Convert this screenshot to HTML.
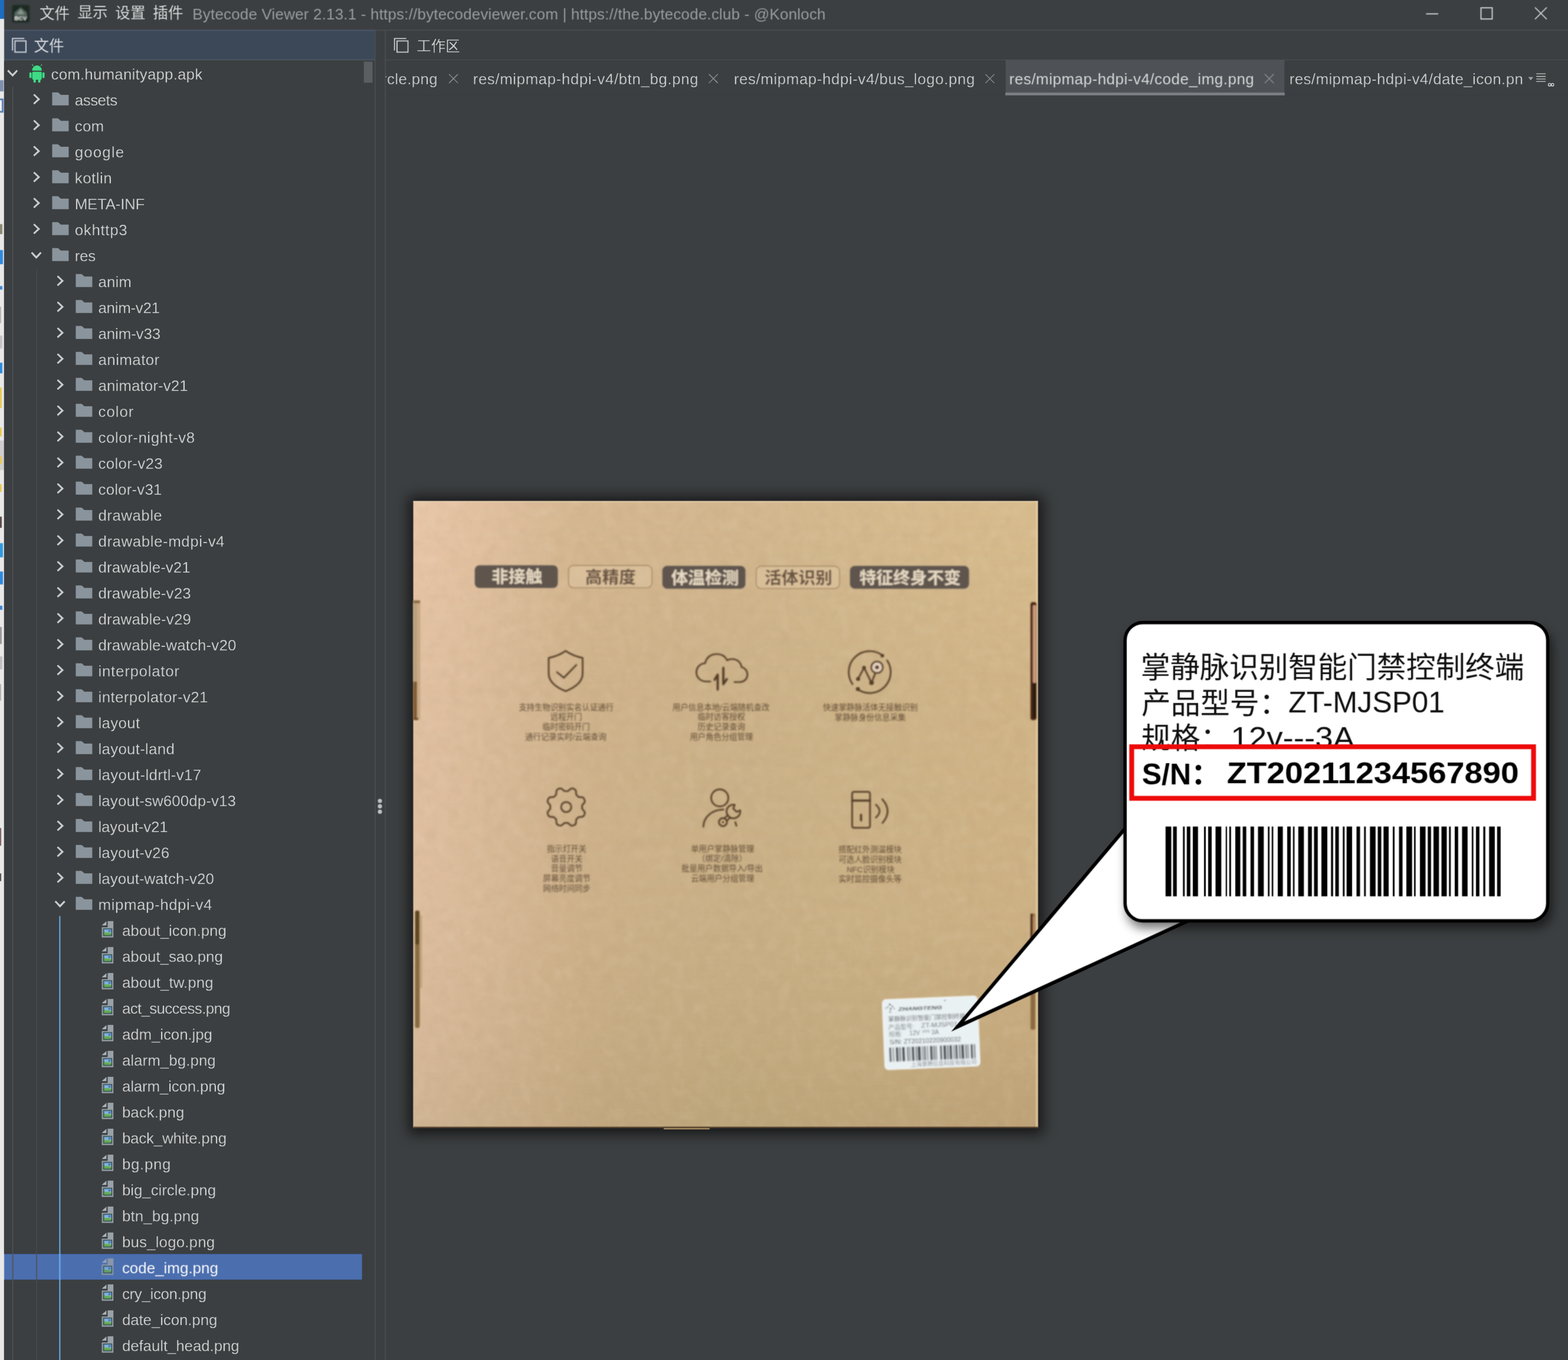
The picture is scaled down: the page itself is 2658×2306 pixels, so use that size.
<!DOCTYPE html>
<html><head><meta charset="utf-8"><title>Bytecode Viewer</title>
<style>
html,body{margin:0;padding:0}
body{width:2658px;height:2306px;background:#3c3f41;position:relative;overflow:hidden;font-family:"Liberation Sans",sans-serif;font-size:26px;color:#cbcdce}
.a{position:absolute}
.t{position:absolute;white-space:pre;line-height:44px;height:44px}
svg{position:absolute;left:0;top:0;overflow:visible}
#w{position:absolute;left:0;top:0;width:2658px;height:2306px;overflow:hidden;filter:url(#gb)}
.cj{font-family:"Liberation Sans","Noto Sans CJK SC",sans-serif}
</style></head><body><svg width="0" height="0" style="position:absolute"><defs><filter id="gb" x="0" y="0" width="100%" height="100%" color-interpolation-filters="sRGB"><feConvolveMatrix order="3" kernelMatrix="0.062 0.249 0.062 0.249 1 0.249 0.062 0.249 0.062" divisor="2.244" edgeMode="duplicate" preserveAlpha="true"/></filter></defs></svg><div id="w">

<div class="a" style="left:0;top:0;width:6.8px;height:2306px;background:#e8e8e8"></div>
<div class="a" style="left:0;top:0;width:6.8px;height:31.5px;background:#1c6cc0"></div>
<div class="a" style="left:0;top:747px;width:6.8px;height:50px;background:#cfcfcf"></div>
<div class="a" style="left:0;top:136px;width:5.5px;height:19px;background:#7f8fb0"></div>
<div class="a" style="left:0;top:167px;width:6px;height:24px;background:#5b7fb8"></div>
<div class="a" style="left:0;top:170px;width:2.5px;height:18px;background:#f4f4f4"></div>
<div class="a" style="left:0;top:380px;width:4px;height:17px;background:#8a8a70"></div>
<div class="a" style="left:0;top:424.4px;width:4.6px;height:23.5px;background:#2f8ae0"></div>
<div class="a" style="left:0;top:484.7px;width:4px;height:6.7px;background:#3f86d6"></div>
<div class="a" style="left:0;top:520px;width:2px;height:27.6px;background:#b5b5b5"></div>
<div class="a" style="left:0;top:569.4px;width:3.5px;height:21.8px;background:#c4c4c4"></div>
<div class="a" style="left:0;top:614.6px;width:4.4px;height:18.4px;background:#2f8ae0"></div>
<div class="a" style="left:0;top:656.5px;width:2.5px;height:24px;background:#e8c95a"></div>
<div class="a" style="left:0;top:676.8px;width:3px;height:15px;background:#e8c95a"></div>
<div class="a" style="left:0;top:725.4px;width:3px;height:15px;background:#e8c95a"></div>
<div class="a" style="left:0;top:774px;width:3px;height:13.4px;background:#e8c95a"></div>
<div class="a" style="left:0;top:820.9px;width:3px;height:13.4px;background:#e8c95a"></div>
<div class="a" style="left:0;top:876px;width:3.2px;height:18.6px;background:#5a4a48"></div>
<div class="a" style="left:0;top:920.6px;width:4.6px;height:24.3px;background:#2f9ae0"></div>
<div class="a" style="left:0;top:968.5px;width:4.6px;height:22.6px;background:#2f8ae0"></div>
<div class="a" style="left:0;top:1027px;width:4px;height:6.8px;background:#3f86d6"></div>
<div class="a" style="left:0;top:1063px;width:2.5px;height:28.7px;background:#9a9a9a"></div>
<div class="a" style="left:0;top:1112.6px;width:3.8px;height:22.6px;background:#c0c0c0"></div>
<div class="a" style="left:0;top:1159.5px;width:1.6px;height:28.5px;background:#b0b0b0"></div>
<div class="a" style="left:0;top:1404px;width:2px;height:30px;background:#7a5a5a"></div>
<div class="a" style="left:0;top:1481px;width:2px;height:13px;background:#4a4a4a"></div>
<div class="a" style="left:7px;top:0;width:2651px;height:51px;background:#3c3f41"></div>
<svg width="2658" height="104">
<defs><filter id="ib"><feGaussianBlur stdDeviation="1"/></filter></defs><g filter="url(#ib)">
<rect x="20.5" y="8.5" width="29.5" height="29.5" rx="3" fill="#1b2a24"/>
<path d="M24.5 30 V21.5 L35 12.5 L45.5 21.5 V30 Z" fill="#56665f"/>
<path d="M28.5 24 L35 15.5 L41.5 24 Z" fill="#87978f"/>
<rect x="23.5" y="27" width="23" height="7.5" fill="#1b2a24" opacity=".6"/>
<text x="24.4" y="33.8" font-family="Liberation Sans" font-weight="bold" font-size="8.4" fill="#eef2f0" textLength="21" lengthAdjust="spacingAndGlyphs">BCV</text></g>
<text class="cj" x="67" y="31.6" font-size="25.6" fill="#d3d5d6">文件</text>
<text class="cj" x="131.4" y="30.2" font-size="25.6" fill="#d3d5d6">显示</text>
<text class="cj" x="195.3" y="31" font-size="25.6" fill="#d3d5d6">设置</text>
<text class="cj" x="259.3" y="31.4" font-size="25.6" fill="#d3d5d6">插件</text>
<path d="M2417.5 23.5h20.5" stroke="#c9cbcc" stroke-width="2" fill="none"/>
<rect x="2510.5" y="13.2" width="19" height="19" stroke="#c9cbcc" stroke-width="2" fill="none"/>
<path d="M2602 12.6l20 20M2622 12.6l-20 20" stroke="#c9cbcc" stroke-width="1.8" fill="none"/>
<rect x="7" y="50.5" width="2651" height="2" fill="#4b4f52"/>
<rect x="7" y="52" width="629" height="49.5" fill="#3c4857"/>
<rect x="7" y="50.5" width="629" height="2" fill="#4a586a"/>
<rect x="7" y="100.6" width="629" height="2" fill="#4d5862"/>
<rect x="653" y="100.6" width="2005" height="1.8" fill="#4b4f52"/>
<rect x="636" y="52" width="17" height="2254" fill="#3c3f41"/>
<rect x="634.8" y="52" width="1.8" height="2254" fill="#4b4f52"/>
<rect x="652.4" y="52" width="1.8" height="2254" fill="#4b4f52"/>
<circle cx="644" cy="1358" r="3.6" fill="#bdbfc0"/>
<circle cx="644" cy="1367.2" r="3.6" fill="#bdbfc0"/>
<circle cx="644" cy="1376.3" r="3.6" fill="#bdbfc0"/>
<path d="M21.2 85.7v-20.5h20" stroke="#c6ccd6" stroke-width="2.1" fill="none"/><rect x="25.4" y="69.4" width="18.6" height="19" stroke="#c6ccd6" stroke-width="2.1" fill="none"/>
<path d="M668.8 85.7v-20.5h20" stroke="#c3c6c8" stroke-width="2.1" fill="none"/><rect x="673" y="69.4" width="18.6" height="19" stroke="#c3c6c8" stroke-width="2.1" fill="none"/>
<text class="cj" x="57.4" y="87.4" font-size="25.6" fill="#d6d9dd">文件</text>
<text class="cj" x="706.2" y="87.3" font-size="24.5" fill="#d0d2d3">工作区</text>
</svg>
<div class="t" style="left:326.3px;top:1.6px;letter-spacing:0.179px;color:#979a9c;">Bytecode Viewer 2.13.1 - https://bytecodeviewer.com | https://the.bytecode.club - @Konloch</div>
<svg width="660" height="2306">
<rect x="7" y="2126" width="607" height="44" fill="#4b6eaf"/>
<rect x="616.5" y="104" width="15.5" height="36.5" fill="#5b5e60"/>
<rect x="20.6" y="146.5" width="2" height="2160" fill="#50555a"/>
<rect x="61" y="455" width="2" height="1851" fill="#50555a"/>
<rect x="100.2" y="1553" width="2.3" height="753" fill="#6aaeea"/>
<defs>
<g id="fd"><path d="M0 0h10.2l4.6 4.3h13.6v18.1h-28.4z" fill="#8a949c"/></g>
<g id="cr"><path d="M1.6 1.5l8.6 8-8.6 8" stroke="#c9cbcc" stroke-width="3.2" fill="none"/></g>
<g id="cd"><path d="M1.5 1.6l8 8.6 8-8.6" stroke="#c9cbcc" stroke-width="3.2" fill="none"/></g>
<g id="im"><path d="M9.9 0h10v28h-19.9v-17.8h9.9z" fill="#9aa2a9"/><path d="M0 7.4l8.1-7.4v7.4z" fill="#aab1b7"/>
<rect x="2.3" y="12.4" width="15.4" height="13" fill="#27464a"/><rect x="3.9" y="13.9" width="12.2" height="5" fill="#7fb0dd"/><rect x="3.9" y="18.9" width="12.2" height="5" fill="#67ad55"/>
<path d="M3.9 19.4c3-2.2 6-2.4 12.2 1.6v-2.1h-12.2z" fill="#a9cdea"/><circle cx="12.9" cy="16.6" r="1.4" fill="#2a58b8"/></g>
<g id="ap" fill="#3ddb84"><path d="M4.6 10.6a8.4 9.3 0 0 1 16.8 0z"/><path d="M6.6 2.6l-1.9-2.8M19.4 2.6l1.9-2.8" stroke="#3ddb84" stroke-width="1.3"/>
<rect x="4.9" y="12" width="16.2" height="13.8" rx="2"/><rect x="0" y="13.2" width="3.9" height="10" rx="1.9"/><rect x="22.1" y="13.2" width="3.9" height="10" rx="1.9"/>
<rect x="7" y="24" width="4.2" height="6.8" rx="1.6"/><rect x="14.8" y="24" width="4.2" height="6.8" rx="1.6"/></g>
</defs>
<use href="#cd" x="11.8" y="117.7"/>
<use href="#ap" x="49.7" y="109.4"/>
<use href="#cr" x="55.6" y="158.7"/>
<use href="#fd" x="88.2" y="156.5"/>
<use href="#cr" x="55.6" y="202.7"/>
<use href="#fd" x="88.2" y="200.5"/>
<use href="#cr" x="55.6" y="246.7"/>
<use href="#fd" x="88.2" y="244.5"/>
<use href="#cr" x="55.6" y="290.7"/>
<use href="#fd" x="88.2" y="288.5"/>
<use href="#cr" x="55.6" y="334.7"/>
<use href="#fd" x="88.2" y="332.5"/>
<use href="#cr" x="55.6" y="378.7"/>
<use href="#fd" x="88.2" y="376.5"/>
<use href="#cd" x="52" y="426.5"/>
<use href="#fd" x="88.2" y="420.5"/>
<use href="#cr" x="95.8" y="466.7"/>
<use href="#fd" x="128.2" y="464.5"/>
<use href="#cr" x="95.8" y="510.7"/>
<use href="#fd" x="128.2" y="508.5"/>
<use href="#cr" x="95.8" y="554.7"/>
<use href="#fd" x="128.2" y="552.5"/>
<use href="#cr" x="95.8" y="598.7"/>
<use href="#fd" x="128.2" y="596.5"/>
<use href="#cr" x="95.8" y="642.7"/>
<use href="#fd" x="128.2" y="640.5"/>
<use href="#cr" x="95.8" y="686.7"/>
<use href="#fd" x="128.2" y="684.5"/>
<use href="#cr" x="95.8" y="730.7"/>
<use href="#fd" x="128.2" y="728.5"/>
<use href="#cr" x="95.8" y="774.7"/>
<use href="#fd" x="128.2" y="772.5"/>
<use href="#cr" x="95.8" y="818.7"/>
<use href="#fd" x="128.2" y="816.5"/>
<use href="#cr" x="95.8" y="862.7"/>
<use href="#fd" x="128.2" y="860.5"/>
<use href="#cr" x="95.8" y="906.7"/>
<use href="#fd" x="128.2" y="904.5"/>
<use href="#cr" x="95.8" y="950.7"/>
<use href="#fd" x="128.2" y="948.5"/>
<use href="#cr" x="95.8" y="994.7"/>
<use href="#fd" x="128.2" y="992.5"/>
<use href="#cr" x="95.8" y="1038.7"/>
<use href="#fd" x="128.2" y="1036.5"/>
<use href="#cr" x="95.8" y="1082.7"/>
<use href="#fd" x="128.2" y="1080.5"/>
<use href="#cr" x="95.8" y="1126.7"/>
<use href="#fd" x="128.2" y="1124.5"/>
<use href="#cr" x="95.8" y="1170.7"/>
<use href="#fd" x="128.2" y="1168.5"/>
<use href="#cr" x="95.8" y="1214.7"/>
<use href="#fd" x="128.2" y="1212.5"/>
<use href="#cr" x="95.8" y="1258.7"/>
<use href="#fd" x="128.2" y="1256.5"/>
<use href="#cr" x="95.8" y="1302.7"/>
<use href="#fd" x="128.2" y="1300.5"/>
<use href="#cr" x="95.8" y="1346.7"/>
<use href="#fd" x="128.2" y="1344.5"/>
<use href="#cr" x="95.8" y="1390.7"/>
<use href="#fd" x="128.2" y="1388.5"/>
<use href="#cr" x="95.8" y="1434.7"/>
<use href="#fd" x="128.2" y="1432.5"/>
<use href="#cr" x="95.8" y="1478.7"/>
<use href="#fd" x="128.2" y="1476.5"/>
<use href="#cd" x="92.2" y="1526.5"/>
<use href="#fd" x="128.2" y="1520.5"/>
<use href="#im" x="172.4" y="1561.8"/>
<use href="#im" x="172.4" y="1605.8"/>
<use href="#im" x="172.4" y="1649.8"/>
<use href="#im" x="172.4" y="1693.8"/>
<use href="#im" x="172.4" y="1737.8"/>
<use href="#im" x="172.4" y="1781.8"/>
<use href="#im" x="172.4" y="1825.8"/>
<use href="#im" x="172.4" y="1869.8"/>
<use href="#im" x="172.4" y="1913.8"/>
<use href="#im" x="172.4" y="1957.8"/>
<use href="#im" x="172.4" y="2001.8"/>
<use href="#im" x="172.4" y="2045.8"/>
<use href="#im" x="172.4" y="2089.8"/>
<use href="#im" x="172.4" y="2133.8" opacity=".8"/>
<use href="#im" x="172.4" y="2177.8"/>
<use href="#im" x="172.4" y="2221.8"/>
<use href="#im" x="172.4" y="2265.8"/>
</svg>
<div class="t" style="left:86.5px;top:103.5px;letter-spacing:0.128px;">com.humanityapp.apk</div>
<div class="t" style="left:126.7px;top:147.5px;letter-spacing:-0.509px;">assets</div>
<div class="t" style="left:126.7px;top:191.5px;letter-spacing:0.225px;">com</div>
<div class="t" style="left:126.7px;top:235.5px;letter-spacing:1.087px;">google</div>
<div class="t" style="left:126.7px;top:279.5px;letter-spacing:0.466px;">kotlin</div>
<div class="t" style="left:126.7px;top:323.5px;letter-spacing:-0.293px;">META-INF</div>
<div class="t" style="left:126.7px;top:367.5px;letter-spacing:0.615px;">okhttp3</div>
<div class="t" style="left:126.7px;top:411.5px;letter-spacing:-0.242px;">res</div>
<div class="t" style="left:166.5px;top:455.5px;letter-spacing:0.010px;">anim</div>
<div class="t" style="left:166.5px;top:499.5px;letter-spacing:-0.355px;">anim-v21</div>
<div class="t" style="left:166.5px;top:543.5px;letter-spacing:-0.180px;">anim-v33</div>
<div class="t" style="left:166.5px;top:587.5px;letter-spacing:0.368px;">animator</div>
<div class="t" style="left:166.5px;top:631.5px;letter-spacing:0.047px;">animator-v21</div>
<div class="t" style="left:166.5px;top:675.5px;letter-spacing:0.908px;">color</div>
<div class="t" style="left:166.5px;top:719.5px;letter-spacing:0.485px;">color-night-v8</div>
<div class="t" style="left:166.5px;top:763.5px;letter-spacing:0.285px;">color-v23</div>
<div class="t" style="left:166.5px;top:807.5px;letter-spacing:0.129px;">color-v31</div>
<div class="t" style="left:166.5px;top:851.5px;letter-spacing:0.398px;">drawable</div>
<div class="t" style="left:166.5px;top:895.5px;letter-spacing:0.496px;">drawable-mdpi-v4</div>
<div class="t" style="left:166.5px;top:939.5px;letter-spacing:0.017px;">drawable-v21</div>
<div class="t" style="left:166.5px;top:983.5px;letter-spacing:0.101px;">drawable-v23</div>
<div class="t" style="left:166.5px;top:1027.5px;letter-spacing:0.134px;">drawable-v29</div>
<div class="t" style="left:166.5px;top:1071.5px;letter-spacing:0.074px;">drawable-watch-v20</div>
<div class="t" style="left:166.5px;top:1115.5px;letter-spacing:0.677px;">interpolator</div>
<div class="t" style="left:166.5px;top:1159.5px;letter-spacing:0.359px;">interpolator-v21</div>
<div class="t" style="left:166.5px;top:1203.5px;letter-spacing:0.252px;">layout</div>
<div class="t" style="left:166.5px;top:1247.5px;letter-spacing:0.218px;">layout-land</div>
<div class="t" style="left:166.5px;top:1291.5px;letter-spacing:0.280px;">layout-ldrtl-v17</div>
<div class="t" style="left:166.5px;top:1335.5px;letter-spacing:0.050px;">layout-sw600dp-v13</div>
<div class="t" style="left:166.5px;top:1379.5px;letter-spacing:-0.187px;">layout-v21</div>
<div class="t" style="left:166.5px;top:1423.5px;letter-spacing:0.073px;">layout-v26</div>
<div class="t" style="left:166.5px;top:1467.5px;">layout-watch-v20</div>
<div class="t" style="left:166.5px;top:1511.5px;letter-spacing:0.507px;">mipmap-hdpi-v4</div>
<div class="t" style="left:206.9px;top:1555.5px;letter-spacing:-0.059px;">about_icon.png</div>
<div class="t" style="left:206.9px;top:1599.5px;letter-spacing:-0.088px;">about_sao.png</div>
<div class="t" style="left:206.9px;top:1643.5px;letter-spacing:0.016px;">about_tw.png</div>
<div class="t" style="left:206.9px;top:1687.5px;letter-spacing:-0.711px;">act_success.png</div>
<div class="t" style="left:206.9px;top:1731.5px;letter-spacing:-0.146px;">adm_icon.jpg</div>
<div class="t" style="left:206.9px;top:1775.5px;letter-spacing:-0.008px;">alarm_bg.png</div>
<div class="t" style="left:206.9px;top:1819.5px;letter-spacing:-0.199px;">alarm_icon.png</div>
<div class="t" style="left:206.9px;top:1863.5px;letter-spacing:0.009px;">back.png</div>
<div class="t" style="left:206.9px;top:1907.5px;letter-spacing:-0.263px;">back_white.png</div>
<div class="t" style="left:206.9px;top:1951.5px;letter-spacing:0.628px;">bg.png</div>
<div class="t" style="left:206.9px;top:1995.5px;letter-spacing:-0.088px;">big_circle.png</div>
<div class="t" style="left:206.9px;top:2039.5px;letter-spacing:0.086px;">btn_bg.png</div>
<div class="t" style="left:206.9px;top:2083.5px;letter-spacing:0.105px;">bus_logo.png</div>
<div class="t" style="left:206.9px;top:2127.5px;letter-spacing:-0.029px;color:#f4f6f8;">code_img.png</div>
<div class="t" style="left:206.9px;top:2171.5px;letter-spacing:-0.377px;">cry_icon.png</div>
<div class="t" style="left:206.9px;top:2215.5px;letter-spacing:-0.152px;">date_icon.png</div>
<div class="t" style="left:206.9px;top:2259.5px;letter-spacing:-0.142px;">default_head.png</div>
<div class="a" style="left:653.6px;top:160.3px;width:2005px;height:1.6px;background:#45494b"></div>
<div class="a" style="left:1703.7px;top:102px;width:474.3px;height:60px;background:#4e5256"></div>
<div class="a" style="left:1703.7px;top:156.5px;width:474.3px;height:5.8px;background:#7b8084"></div>
<div class="a" style="left:653.6px;top:102px;width:140px;height:58px;overflow:hidden">
<div class="t" style="right:51.7px;top:10px;letter-spacing:0.291px;color:#c6c8c9">res/mipmap-hdpi-v4/big_circle.png</div>
</div>
<div class="t" style="left:801.7px;top:112px;letter-spacing:0.534px;color:#c6c8c9;">res/mipmap-hdpi-v4/btn_bg.png</div>
<div class="t" style="left:1243.9px;top:112px;letter-spacing:0.512px;color:#c6c8c9;">res/mipmap-hdpi-v4/bus_logo.png</div>
<div class="t" style="left:1710.8px;top:112px;letter-spacing:0.490px;color:#d2d4d5;">res/mipmap-hdpi-v4/code_img.png</div>
<div class="t" style="left:2185.7px;top:112px;letter-spacing:0.346px;color:#c6c8c9;">res/mipmap-hdpi-v4/date_icon.pn</div>
<svg width="2658" height="170">
<path d="M761 125.6l15.4 15.4M776.4 125.6l-15.4 15.4" stroke="#85888a" stroke-width="1.7" fill="none"/>
<path d="M1201.6 125.6l15.4 15.4M1217 125.6l-15.4 15.4" stroke="#85888a" stroke-width="1.7" fill="none"/>
<path d="M1670.3 125.6l15.4 15.4M1685.7 125.6l-15.4 15.4" stroke="#85888a" stroke-width="1.7" fill="none"/>
<path d="M2143.9 125.6l15.4 15.4M2159.3 125.6l-15.4 15.4" stroke="#85888a" stroke-width="1.7" fill="none"/>
<path d="M2590.4 130.6h9l-4.5 6z" fill="#9da0a2"/>
<rect x="2604" y="124.3" width="16.2" height="1.7" fill="#c3c5c6"/>
<rect x="2604" y="128.8" width="16.2" height="1.7" fill="#c3c5c6"/>
<rect x="2604" y="133.1" width="16.2" height="1.7" fill="#c3c5c6"/>
<rect x="2604" y="137.3" width="16.2" height="1.7" fill="#c3c5c6"/>
<path d="M2624.6 143.7a2.2 2.2 0 1 1 4.4 0a2.2 2.2 0 1 1 -4.4 0M2629.6 143.7a2.2 2.2 0 1 1 4.4 0a2.2 2.2 0 1 1 -4.4 0" stroke="#d8dadb" stroke-width="1.5" fill="none"/>
</svg>
<svg width="2658" height="2306">
<defs>
<linearGradient id="ct" gradientUnits="userSpaceOnUse" x1="700" y1="0" x2="1760" y2="0">
<stop offset="0" stop-color="#e9c7a9"/><stop offset=".12" stop-color="#e1c09f"/><stop offset=".27" stop-color="#d5b891"/><stop offset=".5" stop-color="#d3b78f"/><stop offset="1" stop-color="#d8bd8e"/></linearGradient>
<linearGradient id="cbm" gradientUnits="userSpaceOnUse" x1="700" y1="0" x2="1760" y2="0">
<stop offset="0" stop-color="#cfb393"/><stop offset=".14" stop-color="#c8ad89"/><stop offset=".3" stop-color="#c0a67e"/><stop offset=".5" stop-color="#bca57a"/><stop offset="1" stop-color="#bda177"/></linearGradient>
<linearGradient id="cdk" gradientUnits="userSpaceOnUse" x1="1300" y1="1450" x2="1760" y2="1912"><stop offset="0" stop-color="#6a4a20" stop-opacity="0"/><stop offset="1" stop-color="#6a4a20" stop-opacity="0"/></linearGradient>
<linearGradient id="cm" gradientUnits="userSpaceOnUse" x1="0" y1="850" x2="0" y2="1912">
<stop offset="0" stop-color="#fff" stop-opacity="0"/><stop offset=".3" stop-color="#fff" stop-opacity=".3"/><stop offset=".67" stop-color="#fff" stop-opacity=".43"/><stop offset=".86" stop-color="#fff" stop-opacity=".7"/><stop offset="1" stop-color="#fff" stop-opacity="1"/></linearGradient>
<mask id="mk" maskUnits="userSpaceOnUse" x="690" y="840" width="1080" height="1080"><rect x="690" y="840" width="1080" height="1080" fill="url(#cm)"/></mask>
<filter id="tx" x="0" y="0" width="100%" height="100%"><feTurbulence type="fractalNoise" baseFrequency="0.05" numOctaves="3" seed="7" result="n"/><feColorMatrix in="n" type="matrix" values="0 0 0 0 0.42  0 0 0 0 0.3  0 0 0 0 0.16  0.9 0.9 0 0 -0.78"/></filter>
<filter id="tx2" x="0" y="0" width="100%" height="100%"><feTurbulence type="fractalNoise" baseFrequency="0.05" numOctaves="3" seed="23" result="n"/><feColorMatrix in="n" type="matrix" values="0 0 0 0 1  0 0 0 0 0.93  0 0 0 0 0.8  0.9 0.9 0 0 -0.8"/></filter>
<filter id="sh" x="-10%" y="-10%" width="120%" height="120%"><feGaussianBlur stdDeviation="11"/></filter>
<filter id="sh2" x="-10%" y="-10%" width="120%" height="125%"><feGaussianBlur stdDeviation="9"/></filter>
<filter id="b1"><feGaussianBlur stdDeviation=".8"/></filter>
<filter id="b2"><feGaussianBlur stdDeviation=".9"/></filter>
<filter id="b3"><feGaussianBlur stdDeviation="1.6"/></filter>
</defs>
<rect x="692.5" y="841.5" width="1076" height="1082" fill="#000" opacity=".62" filter="url(#sh)"/>
<rect x="700.5" y="849.5" width="1059" height="1063" fill="url(#ct)"/>
<rect x="700.5" y="849.5" width="1059" height="1063" fill="url(#cbm)" mask="url(#mk)"/>
<rect x="700.5" y="849.5" width="1059" height="1063" fill="url(#cdk)"/>
<rect x="700.5" y="849.5" width="1059" height="1063" filter="url(#tx)" opacity=".2"/>
<rect x="700.5" y="849.5" width="1059" height="1063" filter="url(#tx2)" opacity=".12"/>
<rect x="700.5" y="849.5" width="1059" height="2" fill="#f0dcc2" opacity=".6"/>
<rect x="1755.5" y="849.5" width="4" height="1063" fill="#e6cda4" opacity=".6"/>
<rect x="1125" y="1909.5" width="78" height="5.5" fill="#b99b6e"/>
<rect x="700.5" y="1910.5" width="1059" height="2.4" fill="#3b2b1c" opacity=".85"/>
<g filter="url(#b1)">
<rect x="700.3" y="1019" width="6.6" height="136.7" fill="#b8a07c"/>
<rect x="700.3" y="1155.7" width="6.6" height="64.3" fill="#7d5c34"/>
<rect x="706.9" y="1019" width="5.6" height="201" fill="#c4a680" opacity=".85"/>
<rect x="700.3" y="1018" width="12" height="5" rx="2" fill="#8c6d48"/>
<rect x="700.3" y="1217" width="9" height="4" rx="2" fill="#6e4f2c"/>
<rect x="703.5" y="1544" width="8" height="199" rx="3.5" fill="#8a6c42"/>
<rect x="704" y="1544" width="6.5" height="57.7" rx="3" fill="#5f4424"/>
<rect x="711.5" y="1552" width="4" height="123.4" fill="#b59c74" opacity=".7"/>
<rect x="1746.9" y="1021" width="10" height="200" rx="4" fill="#4a2518"/>
<rect x="1750.7" y="1026" width="5.6" height="132" rx="2" fill="#c99a78"/>
<rect x="1750.7" y="1158" width="5.6" height="59" fill="#2c1a10"/>
<rect x="1746.9" y="1549" width="8" height="197" rx="3" fill="#8c6a40"/>
<rect x="1746.9" y="1549" width="3.4" height="108.4" rx="1.5" fill="#4a2518"/>
<rect x="1750.9" y="1553" width="3.6" height="98.5" rx="1.5" fill="#b08a60"/>
</g>
<g filter="url(#b1)">
<rect x="804.8" y="958.4" width="140.8" height="38.6" rx="8" fill="#5f554e"/>
<text class="cj" x="833.3" y="988.4" font-size="28.7" font-weight="bold" fill="#e8dac2">非接触</text>
<rect x="963.9" y="958.9" width="141.2" height="37.6" rx="8" fill="#ecd5b4" fill-opacity=".3" stroke="#a58863" stroke-width="1.6"/>
<text class="cj" x="992" y="988.6" font-size="28.7" font-weight="bold" fill="#6a5443">高精度</text>
<rect x="1122.8" y="959.6" width="140.8" height="38.6" rx="8" fill="#5f554e"/>
<text class="cj" x="1137.7" y="989.9" font-size="28.7" font-weight="bold" fill="#e8dac2">体温检测</text>
<rect x="1281.9" y="960.1" width="141.2" height="37.6" rx="8" fill="#ecd5b4" fill-opacity=".3" stroke="#a58863" stroke-width="1.6"/>
<text class="cj" x="1296.1" y="989.6" font-size="28.7" font-weight="bold" fill="#6a5443">活体识别</text>
<rect x="1440.8" y="959.6" width="201.8" height="38.6" rx="8" fill="#5f554e"/>
<text class="cj" x="1456.7" y="989.9" font-size="28.7" font-weight="bold" fill="#e8dac2">特征终身不变</text>
</g>
<g filter="url(#b1)" fill="none" stroke="#523c28" stroke-width="2.7" stroke-linecap="round" stroke-linejoin="round">
<path d="M958.9 1103.6c-8.6 6.2-17.600 9.600-28.800 12v26.500c0 13.500 11.500 23 28.800 30c17.300-7 28.800-16.500 28.800-30v-26.500c-11.200-2.400-20.200-5.800-28.800-12z"/>
<path d="M944.200 1139.800l11.600 9.400 21.200-21.800"/>
<path d="M1204 1155.500h-7c-9 0-16.500-6.500-16.500-15.500c0-8.500 6.500-15 15-15.500c1.500-9.500 9.500-15.500 19.500-15.500c8 0 14.500 4 17.500 10.500c2.500-1.500 5.500-2 8.500-2c8.500 0 15 5.500 16 13.500c6 1.500 10 6.500 10 12.500c0 7.500-5.500 13-13 13h-9"/>
<path d="M1216.600 1169v-25l-5.200 8.500M1226.200 1132.500v27.500l5.800-8.500" stroke-width="3.800"/>
<path d="M1445.2 1160.1A35.6 35.6 0 0 1 1495.9 1111.3M1503.8 1119.7A35.6 35.6 0 0 1 1453.8 1168.7"/>
<circle cx="1495.7" cy="1111.8" r="3" fill="#523c28" stroke="none"/><circle cx="1454.2" cy="1168.3" r="3.4" fill="#523c28" stroke="none"/>
<path d="M1454.6 1151.2L1464.7 1132.2L1477.4 1157.8L1483.2 1142.8"/>
<circle cx="1454.6" cy="1151.2" r="3.3" fill="#523c28" stroke="none"/><circle cx="1464.7" cy="1132.2" r="3.1" fill="#523c28" stroke="none"/><circle cx="1477.4" cy="1157.6" r="3.9" fill="#523c28" stroke="none"/>
<circle cx="1486.7" cy="1131.5" r="9.6" fill="#ecd9cc" fill-opacity=".75"/><circle cx="1486.7" cy="1131.5" r="3.3" fill="#523c28" stroke="none"/>
<path d="M986.7 1368.4L986.7 1369.5L986.7 1370.5L987.1 1371.6L988.0 1372.9L989.3 1374.3L990.6 1375.8L991.3 1377.3L991.4 1378.7L991.1 1379.9L990.6 1381.1L990.1 1382.4L989.4 1383.5L988.4 1384.4L986.8 1384.9L984.8 1385.1L982.9 1385.2L981.4 1385.4L980.3 1385.9L979.5 1386.6L978.8 1387.4L978.0 1388.1L977.3 1388.9L976.8 1390.0L976.6 1391.5L976.5 1393.4L976.3 1395.4L975.8 1397.0L974.9 1398.0L973.8 1398.7L972.5 1399.2L971.3 1399.7L970.1 1400.0L968.7 1399.9L967.2 1399.2L965.7 1397.9L964.3 1396.6L963.0 1395.7L961.9 1395.3L960.9 1395.3L959.8 1395.3L958.7 1395.3L957.7 1395.3L956.6 1395.7L955.3 1396.6L953.9 1397.9L952.4 1399.2L950.9 1399.9L949.5 1400.0L948.3 1399.7L947.1 1399.2L945.8 1398.7L944.7 1398.0L943.8 1397.0L943.3 1395.4L943.1 1393.4L943.0 1391.5L942.8 1390.0L942.3 1388.9L941.6 1388.1L940.8 1387.4L940.1 1386.6L939.3 1385.9L938.2 1385.4L936.7 1385.2L934.8 1385.1L932.8 1384.9L931.2 1384.4L930.2 1383.5L929.5 1382.4L929.0 1381.1L928.5 1379.9L928.2 1378.7L928.3 1377.3L929.0 1375.8L930.3 1374.3L931.6 1372.9L932.5 1371.6L932.9 1370.5L932.9 1369.5L932.9 1368.4L932.9 1367.3L932.9 1366.3L932.5 1365.2L931.6 1363.9L930.3 1362.5L929.0 1361.0L928.3 1359.5L928.2 1358.1L928.5 1356.9L929.0 1355.7L929.5 1354.4L930.2 1353.3L931.2 1352.4L932.8 1351.9L934.8 1351.7L936.7 1351.6L938.2 1351.4L939.3 1350.9L940.1 1350.2L940.8 1349.4L941.6 1348.7L942.3 1347.9L942.8 1346.8L943.0 1345.3L943.1 1343.4L943.3 1341.4L943.8 1339.8L944.7 1338.8L945.8 1338.1L947.1 1337.6L948.3 1337.1L949.5 1336.8L950.9 1336.9L952.4 1337.6L953.9 1338.9L955.3 1340.2L956.6 1341.1L957.7 1341.5L958.7 1341.5L959.8 1341.5L960.9 1341.5L961.9 1341.5L963.0 1341.1L964.3 1340.2L965.7 1338.9L967.2 1337.6L968.7 1336.9L970.1 1336.8L971.3 1337.1L972.5 1337.6L973.8 1338.1L974.9 1338.8L975.8 1339.8L976.3 1341.4L976.5 1343.4L976.6 1345.3L976.8 1346.8L977.3 1347.9L978.0 1348.7L978.8 1349.4L979.5 1350.2L980.3 1350.9L981.4 1351.4L982.9 1351.6L984.8 1351.7L986.8 1351.9L988.4 1352.4L989.4 1353.3L990.1 1354.4L990.6 1355.7L991.1 1356.9L991.4 1358.1L991.3 1359.5L990.6 1361.0L989.3 1362.5L988.0 1363.9L987.1 1365.2L986.7 1366.3L986.7 1367.3Z"/>
<circle cx="959.8" cy="1368.4" r="8.6"/>
<circle cx="1220.1" cy="1352.9" r="14.5"/>
<path d="M1192.2 1401.7C1193 1385 1207 1373 1226.3 1372.7"/>
<circle cx="1225.5" cy="1394" r="6.8"/><circle cx="1225.5" cy="1394" r="1.8" fill="#523c28" stroke="none"/>
<path d="M1232.2 1391.6L1237.9 1386.1M1228.2 1387.4L1233.9 1381.9"/>
<path d="M1245.6 1364.6L1242.9 1370.8L1248.7 1376.6L1254.6 1373.9A11.6 11.6 0 1 1 1245.6 1364.6Z"/>
<path d="M1246.4 1394L1248.4 1400.2"/>
<rect x="1444.5" y="1342.7" width="30.3" height="60.9" rx="3"/>
<path d="M1444.5 1357.5h30.3" stroke-width="3.4"/><path d="M1459.6 1381.5v9.5" stroke-width="3.6"/>
<path d="M1484.8 1364.5Q1497.2 1375.3 1484.8 1386.2M1495.6 1355.2Q1513.4 1375.3 1496 1395.4"/>
</g>
<g filter="url(#b2)" fill="#57432f" opacity=".9" class="cj" font-size="13.4">
<text x="879.4" y="1203.5">支持生物识别实名认证通行</text>
<text x="933" y="1220.2">远程开门</text>
<text x="919.6" y="1236.9">临时密码开门</text>
<text x="890.2" y="1253.6">通行记录实时/云端查询</text>
<text x="1140" y="1203.5">用户信息本地/云端随机查改</text>
<text x="1182.8" y="1220.2">临时访客授权</text>
<text x="1182.8" y="1236.9">历史记录查询</text>
<text x="1169.4" y="1253.6">用户角色分组管理</text>
<text x="1394.9" y="1204.1">快速掌静脉活体无接触识别</text>
<text x="1415" y="1221.1">掌静脉身份信息采集</text>
<text x="927.2" y="1443.7">指示灯开关</text>
<text x="933.9" y="1460.5">语音开关</text>
<text x="933.9" y="1477.2">音量调节</text>
<text x="920.5" y="1494">屏幕亮度调节</text>
<text x="920.5" y="1510.7">网络时间同步</text>
<text x="1171.2" y="1443.7">单用户掌静脉管理</text>
<text x="1182" y="1460.3">（绑定/清除）</text>
<text x="1155.2" y="1476.9">批量用户数据导入/导出</text>
<text x="1171.2" y="1493.5">云端用户分组管理</text>
<text x="1421.4" y="1445.3">搭配红外测温模块</text>
<text x="1421.4" y="1461.9">可选人脸识别模块</text>
<text x="1435.2" y="1478.5">NFC识别模块</text>
<text x="1421.4" y="1495.1">实时监控摄像头等</text>
</g>
<g transform="translate(1495.6 1695.3) rotate(-2.35)" filter="url(#b2)">
<rect x="0" y="0" width="161" height="118.5" rx="6" fill="#eaf1f3"/>
<rect x="0" y="0" width="161" height="118.5" rx="6" fill="none" stroke="#f6fafb" stroke-width="1.5"/>
<g fill="#2c3036">
<circle cx="12.5" cy="8.5" r="1.6"/>
<circle cx="16.5" cy="12" r="1.3"/>
<circle cx="9" cy="12.5" r="1.1"/>
<circle cx="13.5" cy="16" r="1.5"/>
<circle cx="12.5" cy="21" r="1.2"/>
<circle cx="6" cy="14.5" r=".9"/>
<circle cx="19.5" cy="15.5" r=".9"/>
<circle cx="106" cy="5.5" r="1.1"/>
</g>
<text x="26.5" y="20.3" font-family="Liberation Sans" font-weight="bold" font-style="italic" font-size="9.6" fill="#2c3036" textLength="74" lengthAdjust="spacingAndGlyphs">ZHANGTENG</text>
<text class="cj" x="8.5" y="36.5" font-size="10.1" fill="#2c3036" opacity="0.7">掌静脉识别智能门禁控制终端</text>
<text class="cj" x="8.5" y="50.5" font-size="10.2" fill="#2c3036" opacity="0.62">产品型号:</text>
<text x="64" y="49.8" font-family="Liberation Sans" font-size="10.2" fill="#2c3036" opacity=".72" textLength="62" lengthAdjust="spacingAndGlyphs">ZT-MJSP01</text>
<text class="cj" x="8.5" y="62.5" font-size="10.2" fill="#2c3036" opacity="0.55">规格:</text>
<text x="43.5" y="62" font-family="Liberation Sans" font-size="10.2" fill="#2c3036" opacity=".72">12V</text>
<path d="M66 55.3h12M66 57.8h2.500M70.500 57.800h2.500M75 57.800h2.500" stroke="#2c3036" stroke-width=".9" opacity=".72"/>
<text x="81" y="62" font-family="Liberation Sans" font-size="10.2" fill="#2c3036" opacity=".72">3A</text>
<text x="9.5" y="75.6" font-family="Liberation Sans" font-size="10.6" fill="#2c3036" opacity=".85" textLength="121" lengthAdjust="spacingAndGlyphs">S/N: ZT20210220900032</text>
<g fill="#2c3036" opacity=".88">
<rect x="8.5" y="81.5" width="3" height="24"/>
<rect x="14.5" y="81.5" width="1.5" height="24"/>
<rect x="19.5" y="81.5" width="4" height="24"/>
<rect x="25.5" y="81.5" width="2" height="24"/>
<rect x="30" y="81.5" width="4.5" height="24"/>
<rect x="38.5" y="81.5" width="2" height="24"/>
<rect x="42.5" y="81.5" width="1.5" height="24"/>
<rect x="46.5" y="81.5" width="4" height="24"/>
<rect x="53" y="81.5" width="2" height="24"/>
<rect x="56.5" y="81.5" width="5" height="24"/>
<rect x="64" y="81.5" width="1.5" height="24"/>
<rect x="67.5" y="81.5" width="2.5" height="24"/>
<rect x="72.5" y="81.5" width="1.5" height="24"/>
<rect x="77.5" y="81.5" width="4" height="24"/>
<rect x="83.5" y="81.5" width="2" height="24"/>
<rect x="87.5" y="81.5" width="1.5" height="24"/>
<rect x="94.5" y="81.5" width="3" height="24"/>
<rect x="100" y="81.5" width="4.5" height="24"/>
<rect x="106.5" y="81.5" width="2" height="24"/>
<rect x="110.5" y="81.5" width="4" height="24"/>
<rect x="117" y="81.5" width="1.5" height="24"/>
<rect x="120.5" y="81.5" width="3.5" height="24"/>
<rect x="126.5" y="81.5" width="2" height="24"/>
<rect x="130.5" y="81.5" width="4.5" height="24"/>
<rect x="137.5" y="81.5" width="2" height="24"/>
<rect x="141.5" y="81.5" width="1.5" height="24"/>
<rect x="146.5" y="81.5" width="3.5" height="24"/>
<rect x="152" y="81.5" width="2" height="24"/>
</g>
<text class="cj" x="44" y="114.8" font-size="9.3" fill="#2c3036" opacity="0.5">上海掌腾信息科技有限公司</text>
</g>
<path d="M1960 1342.4L1623.3 1740.8L2100 1521.8Z" fill="#fff" stroke="#000" stroke-width="6" stroke-linejoin="miter" stroke-miterlimit="12"/>
<rect x="1910" y="1066" width="722" height="508" rx="30" fill="#000" opacity=".55" filter="url(#sh2)"/>
<rect x="1907.2" y="1055.6" width="716.4" height="505.8" rx="30" fill="#fff" stroke="#000" stroke-width="5.6"/>
<text class="cj" x="1933.8" y="1149.2" font-size="50" fill="#111">掌静脉识别智能门禁控制终端</text>
<text class="cj" x="1934.8" y="1210.1" font-size="50" fill="#111">产品型号：</text>
<text class="cj" x="2184" y="1208.3" font-size="50" fill="#111" textLength="265" lengthAdjust="spacingAndGlyphs">ZT-MJSP01</text>
<text class="cj" x="1934.8" y="1269.1" font-size="50" fill="#111">规格：</text>
<text class="cj" x="2086.3" y="1267.5" font-size="50" fill="#111" textLength="210" lengthAdjust="spacingAndGlyphs">12v---3A</text>
<rect x="1918" y="1276" width="682" height="76" fill="#fff"/>
<rect x="1918.4" y="1266.2" width="681.2" height="87.4" fill="none" stroke="#ee0a0a" stroke-width="8.2"/>
<text class="cj" x="1935.7" y="1329.7" font-size="50" font-weight="bold" fill="#000">S/N：</text>
<text class="cj" x="2079.8" y="1327.8" font-size="50" font-weight="bold" fill="#000" textLength="495" lengthAdjust="spacingAndGlyphs">ZT20211234567890</text>
<path d="M1975.8 1401.6h9.7v118.2h-9.7zM1988.5 1401.6h6.3v118.2h-6.3zM2005.3 1401.6h3v118.2h-3zM2011.8 1401.6h6v118.2h-6zM2022 1401.6h8.8v118.2h-8.8zM2041 1401.6h3v118.2h-3zM2048 1401.6h6v118.2h-6zM2060.5 1401.6h9.8v118.2h-9.8zM2077.8 1401.6h2.2v118.2h-2.2zM2083.8 1401.6h3v118.2h-3zM2094 1401.6h8.5v118.2h-8.5zM2106.6 1401.6h6v118.2h-6zM2119.8 1401.6h6v118.2h-6zM2132.5 1401.6h9.8v118.2h-9.8zM2149.3 1401.6h2.7v118.2h-2.7zM2155.8 1401.6h2.6v118.2h-2.6zM2166 1401.6h8.6v118.2h-8.6zM2182 1401.6h6v118.2h-6zM2191.8 1401.6h2.6v118.2h-2.6zM2200.8 1401.6h9.5v118.2h-9.5zM2217.3 1401.6h6.5v118.2h-6.5zM2227.5 1401.6h6.3v118.2h-6.3zM2240 1401.6h10v118.2h-10zM2256.3 1401.6h3.5v118.2h-3.5zM2263.5 1401.6h6v118.2h-6zM2276.3 1401.6h3v118.2h-3zM2282.7 1401.6h9.3v118.2h-9.3zM2299.5 1401.6h6v118.2h-6zM2312.3 1401.6h3v118.2h-3zM2322.3 1401.6h9.5v118.2h-9.5zM2335.5 1401.6h6v118.2h-6zM2345.3 1401.6h8.7v118.2h-8.7zM2361 1401.6h3v118.2h-3zM2371.5 1401.6h6v118.2h-6zM2384 1401.6h9.7v118.2h-9.7zM2397 1401.6h2.7v118.2h-2.7zM2407 1401.6h9.5v118.2h-9.5zM2420.3 1401.6h5.5v118.2h-5.5zM2430 1401.6h9.3v118.2h-9.3zM2443.5 1401.6h9v118.2h-9zM2456.3 1401.6h3v118.2h-3zM2466 1401.6h5.8v118.2h-5.8zM2478.4 1401.6h9.4v118.2h-9.4zM2494.9 1401.6h2.7v118.2h-2.7zM2502 1401.6h5.8v118.2h-5.8zM2514.4 1401.6h3.4v118.2h-3.4zM2524.3 1401.6h9.6v118.2h-9.6zM2537.8 1401.6h6v118.2h-6z" fill="#000"/>
</svg>
</div></body></html>
